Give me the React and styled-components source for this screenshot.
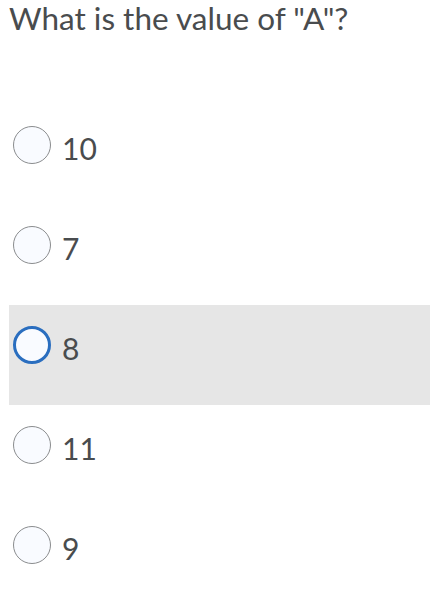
import React, { useState } from "react";
import styled, { createGlobalStyle } from "styled-components";

const Global = createGlobalStyle`
  html, body { margin: 0; padding: 0; background: #ffffff; }
  body { font-family: Lato, "Open Sans", sans-serif; color: #494c4e; }
`;

const Page = styled.div`
  padding: 0 0 0 9px;
`;

const Title = styled.h1`
  margin: 0;
  font-family: Lato, sans-serif;
  font-weight: 400;
  font-size: 31.5px;
  line-height: 36px;
  color: #494c4e;
`;

const Options = styled.div`
  margin-top: 69px;
  display: flex;
  flex-direction: column;
`;

const Row = styled.label`
  height: 100px;
  box-sizing: border-box;
  padding: 21px 0 0 4px;
  display: flex;
  align-items: flex-start;
  gap: 11px;
  background: ${(p) => (p.$active ? "#e6e6e6" : "transparent")};
  cursor: pointer;
`;

const Radio = styled.span`
  width: 38px;
  height: 38px;
  box-sizing: border-box;
  border-radius: 50%;
  flex: none;
  background: #f9fbff;
  border: ${(p) => (p.$focus ? "3px solid #2a6ebf" : "1px solid #8a8c8e")};
`;

const Label = styled.span`
  font-family: Lato, sans-serif;
  font-size: 30px;
  line-height: 38px;
  padding-top: 3px;
  color: #494c4e;
`;

const options = ["10", "7", "8", "11", "9"];

export default function App() {
  const [active] = useState(2);
  return (
    <Page>
      <Global />
      <Title>What is the value of "A"?</Title>
      <Options>
        {options.map((o, i) => (
          <Row key={o} $active={i === active}>
            <Radio $focus={i === active} />
            <Label>{o}</Label>
          </Row>
        ))}
      </Options>
    </Page>
  );
}
